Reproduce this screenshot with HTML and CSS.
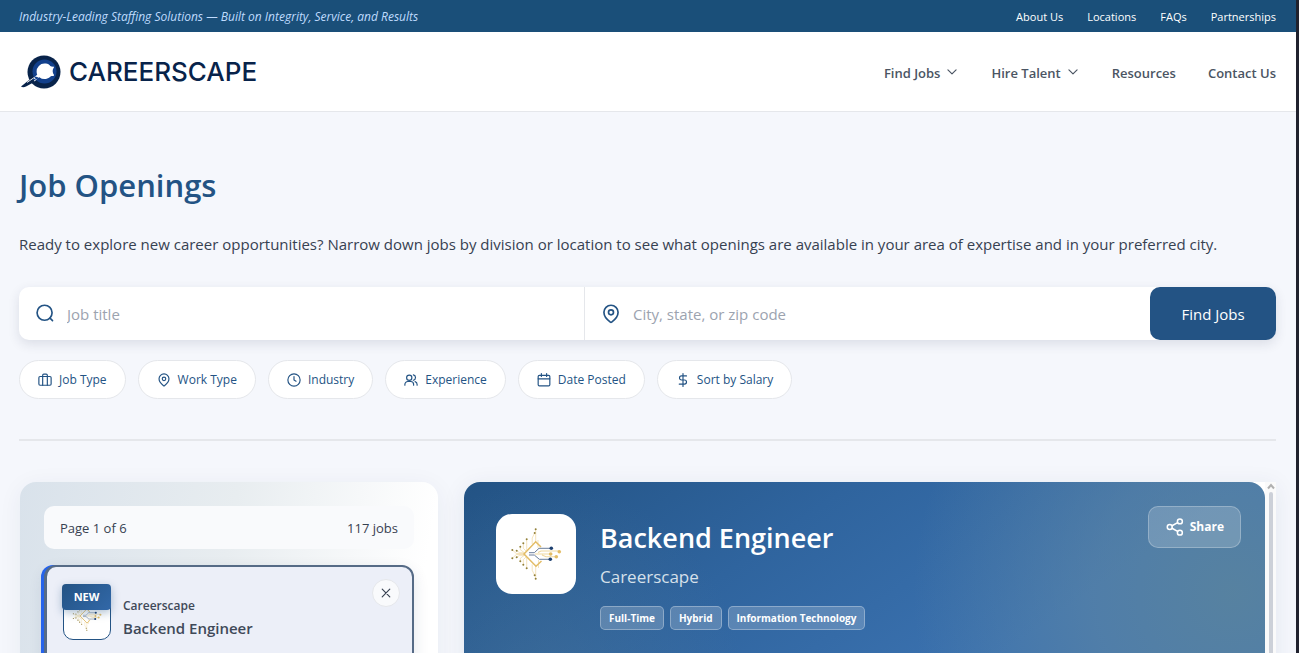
FILE: index.html
```html
<!DOCTYPE html>
<html lang="en">
<head>
<meta charset="utf-8">
<title>Job Openings | Careerscape</title>
<meta name="viewport" content="width=device-width, initial-scale=1">
<link rel="stylesheet" href="styles.css">
</head>
<body>
<svg class="sprite" aria-hidden="true">
  <symbol id="chevron" viewBox="0 0 24 24"><path d="m5 6.500 7 7 7-7"/></symbol>
  <symbol id="search" viewBox="0 0 24 24"><circle cx="11.500" cy="10.500" r="9"/><path d="m21 20-3-3"/></symbol>
  <symbol id="pin" viewBox="0 0 24 24"><path d="M20.500 10c0 5-5.500 10.200-7.700 11.800a1.300 1.300 0 0 1-1.600 0C9 20.200 3.500 15 3.500 10a8.500 8.500 0 0 1 17 0"/><circle cx="12" cy="10" r="3"/></symbol>
  <symbol id="luggage" viewBox="0 0 24 24"><rect x="1.500" y="6" width="21" height="15" rx="2"/><path d="M8 21V4a2 2 0 0 1 2-2h4a2 2 0 0 1 2 2v17"/></symbol>
  <symbol id="clock" viewBox="0 0 24 24"><circle cx="12" cy="12" r="10.500"/><path d="M12 6v6l3.500 2"/></symbol>
  <symbol id="users" viewBox="0 0 24 24"><circle cx="9" cy="8" r="4.500"/><path d="M1.500 21v-1.500a5 5 0 0 1 5-5h5a5 5 0 0 1 5 5V21M16 3.300a4.700 4.700 0 0 1 0 9.200M22.500 21v-1.500a5 5 0 0 0-3.500-4.700"/></symbol>
  <symbol id="calendar" viewBox="0 0 24 24"><rect x="2" y="4" width="20" height="18" rx="2"/><path d="M7.500 1v5M16.500 1v5M2 10h20"/></symbol>
  <symbol id="dollar" viewBox="0 0 24 24"><path d="M12 1v22M18 5H9.500a3.500 3.500 0 0 0 0 7h5a3.500 3.500 0 0 1 0 7H5.500"/></symbol>
  <symbol id="close" viewBox="0 0 24 24"><path d="M18.500 5.500l-13 13M5.500 5.500l13 13"/></symbol>
  <symbol id="share" viewBox="0 0 24 24"><circle cx="18.500" cy="4.500" r="3.300"/><circle cx="5" cy="12" r="3.300"/><circle cx="18.500" cy="19.500" r="3.300"/><path d="m8 13.700 7.500 4.200M15.500 6.100 8 10.300"/></symbol>
  <symbol id="circuit" viewBox="0 0 80 80">
    <g fill="none" stroke="#f0d9a0" stroke-width=".7">
      <path d="M39.700 15.300V28M38.700 19l-2.500 5v6M30.700 25.300v11M27.300 29.300v5l3 3M24.300 32.700v3l4 3M20.700 36.700l3 2h5M16.300 36l4 3.500h8M16.300 44.300l4-3.800h8M20.700 43.300l3-2h5M24.300 47.300v-3l4-3M27.300 50.700v-5l3-3M30.700 54.300v-11M38.700 61.300l-2.500-5v-6M39.700 64.700V52M42 26v8M42.500 54V46"/>
      <path d="M39 40h16M42 38.500l3-1.500h18M46 41l4 1.700h10" stroke-width="1.100"/>
    </g>
    <path d="M45 33 39.700 27.700 28 40l12 12.300 5.500-5.300" fill="none" stroke="#e3bd67" stroke-width="1.500"/>
    <path d="M33 38.700h5.300l4.700-4.400h12M33 41h5.300l5 4.300h11" fill="none" stroke="#6a7d9a" stroke-width="1"/>
    <g fill="#1c3f70"><circle cx="55.300" cy="34.300" r="1.800"/><circle cx="54.300" cy="45.300" r="1.800"/></g>
    <g fill="#e3bd67"><circle cx="54.700" cy="40" r="1.800"/><circle cx="63.300" cy="37.700" r="1.800"/><circle cx="60.300" cy="42.700" r="1.800"/></g>
    <g fill="#92803a"><circle cx="39.700" cy="15.300" r="1"/><circle cx="38.700" cy="19" r="1"/><circle cx="30.700" cy="25.300" r="1"/><circle cx="27.300" cy="29.300" r="1"/><circle cx="24.300" cy="32.700" r="1"/><circle cx="20.700" cy="36.700" r="1"/><circle cx="16.300" cy="36" r="1"/><circle cx="16.300" cy="44.300" r="1"/><circle cx="20.700" cy="43.300" r="1"/><circle cx="24.300" cy="47.300" r="1"/><circle cx="27.300" cy="50.700" r="1"/><circle cx="30.700" cy="54.300" r="1"/><circle cx="38.700" cy="61.300" r="1"/><circle cx="39.700" cy="64.700" r="1"/></g>
  </symbol>
</svg>

<div class="page">
  <div class="topbar">
    <p class="tagline">Industry-Leading Staffing Solutions — Built on Integrity, Service, and Results</p>
    <nav class="topbar-links" aria-label="Company">
      <a href="#about">About Us</a><a href="#locations">Locations</a><a href="#faqs">FAQs</a><a href="#partnerships">Partnerships</a>
    </nav>
  </div>

  <header class="header">
    <a class="brand" href="#home">
      <svg class="brand-mark" viewBox="0 0 42 36" aria-hidden="true">
        <path d="M1 32.500 14 22l4 4-12 6.500c-2 1-4 .8-5 0z" fill="#08234a"/>
        <circle cx="24" cy="18" r="16.500" fill="#08234a"/>
        <circle cx="24.500" cy="17.500" r="12" fill="#12408c"/>
        <path d="M33.500 12.500c-1.600.4-2.900 0-3.800-1.300-1.500-1.200-3.300-1.600-5.200-1.600a7.800 7.800 0 0 0-7.900 8c0 1.200.2 2.200.6 3.200l-3.800 3.200 3.500.7 2.500-1.500a8 8 0 0 0 5.100 1.900c2 0 3.700-.6 5.200-1.800.9-1.200 2.300-1.600 4-1.200l.3-1.400c-1.700-2-1.700-6 0-7z" fill="#fff"/>
        <path d="m12.500 26 3-3.500 3 1-2.500 3z" fill="#12408c"/>
        <path d="m7 28.500 6.500-4.500 2 .8M14 27l2.500-1.500" fill="none" stroke="#fff" stroke-width=".9"/>
      </svg>
      <span>CAREERSCAPE</span>
    </a>
    <nav class="main-nav" aria-label="Main">
      <a href="#find">Find Jobs <svg class="icon icon-14"><use href="#chevron"/></svg></a>
      <a href="#hire">Hire Talent <svg class="icon icon-14"><use href="#chevron"/></svg></a>
      <a href="#resources">Resources</a>
      <a href="#contact">Contact Us</a>
    </nav>
  </header>

  <main class="main">
    <h1>Job Openings</h1>
    <p class="intro">Ready to explore new career opportunities? Narrow down jobs by division or location to see what openings are available in your area of expertise and in your preferred city.</p>

    <form class="search">
      <label class="field"><svg class="icon icon-20" aria-hidden="true"><use href="#search"/></svg><input type="text" placeholder="Job title" aria-label="Job title"></label>
      <label class="field"><svg class="icon icon-20" aria-hidden="true"><use href="#pin"/></svg><input type="text" placeholder="City, state, or zip code" aria-label="City, state, or zip code"></label>
      <button class="search-button" type="button">Find Jobs</button>
    </form>

    <div class="filters">
      <button type="button"><svg class="icon icon-14"><use href="#luggage"/></svg>Job Type</button>
      <button type="button"><svg class="icon icon-14"><use href="#pin"/></svg>Work Type</button>
      <button type="button"><svg class="icon icon-14"><use href="#clock"/></svg>Industry</button>
      <button type="button"><svg class="icon icon-14"><use href="#users"/></svg>Experience</button>
      <button type="button"><svg class="icon icon-14"><use href="#calendar"/></svg>Date Posted</button>
      <button type="button"><svg class="icon icon-14"><use href="#dollar"/></svg>Sort by Salary</button>
    </div>

    <div class="results">
      <section class="list" aria-label="Jobs">
        <div class="pager"><span>Page 1 of 6</span><span>117 jobs</span></div>
        <article class="job">
          <div class="job-logo"><svg><use href="#circuit"/></svg><span class="badge">NEW</span></div>
          <div class="job-text"><p>Careerscape</p><h2>Backend Engineer</h2></div>
          <button class="close" type="button" aria-label="Dismiss"><svg class="icon icon-14"><use href="#close"/></svg></button>
        </article>
      </section>

      <section class="detail" aria-label="Job details">
        <div class="hero">
          <svg class="hero-logo"><use href="#circuit"/></svg>
          <div class="hero-text">
            <h2>Backend Engineer</h2>
            <p>Careerscape</p>
            <ul class="tags"><li>Full-Time</li><li>Hybrid</li><li>Information Technology</li></ul>
          </div>
          <button class="share" type="button"><svg class="icon icon-18"><use href="#share"/></svg>Share</button>
        </div>
        <div class="scrollbar" aria-hidden="true"><svg viewBox="0 0 8 6"><path d="m1 5 3-3.500L7 5" fill="none" stroke="#b0b0b0" stroke-width="2"/></svg><span></span></div>
      </section>
    </div>
  </main>
</div>
</body>
</html>
```
FILE: styles.css
```css
* { box-sizing: border-box; }

body {
  margin: 0;
  background: #f5f7fc;
  color: #374151;
  font-family: "Open Sans", "Noto Sans", sans-serif;
  font-size: 13px;
  line-height: 20px;
}

h1, h2, p, ul { margin: 0; padding: 0; }
a { color: inherit; text-decoration: none; }
button, input { font: inherit; }
button { cursor: pointer; }

.sprite { position: absolute; width: 0; height: 0; }

.icon { flex: none; fill: none; stroke: currentColor; stroke-width: 2; stroke-linecap: round; stroke-linejoin: round; }
.icon-14 { width: 14px; height: 14px; }
.icon-18 { width: 18px; height: 18px; }
.icon-20 { width: 20px; height: 20px; }

.page {
  display: flex;
  flex-direction: column;
  height: 100vh;
  overflow: hidden;
  border-right: 3px solid #20222e;
}

.topbar {
  flex: none;
  display: flex;
  align-items: center;
  justify-content: space-between;
  height: 32px;
  padding: 2px 20px 0 19px;
  background: #1a4f79;
  color: #fff;
  font-size: 12px;
}
.tagline { color: #bfdbfe; font-style: italic; }
.topbar-links { display: flex; gap: 24px; font-size: 11px; font-weight: 500; }

.header {
  flex: none;
  display: flex;
  align-items: center;
  justify-content: space-between;
  height: 80px;
  padding: 0 20px;
  background: #fff;
  border-bottom: 1px solid #e5e7eb;
}
.brand { display: flex; align-items: center; gap: 7px; color: #08234a; font: 500 26px/36px Inter, sans-serif; }
.brand-mark { width: 42px; height: 36px; }
.main-nav { display: flex; gap: 32px; padding-top: 2px; color: #4b5563; font-size: 13px; font-weight: 600; }
.main-nav a { display: flex; align-items: center; gap: 5px; }

.main {
  flex: 1;
  min-height: 0;
  display: flex;
  flex-direction: column;
  padding: 49px 20px 0 19px;
}
h1 { color: #235384; font-size: 31px; font-weight: 600; line-height: 48px; }
.intro { margin-top: 22px; font-size: 15px; line-height: 26px; }

.search {
  flex: none;
  display: flex;
  margin-top: 30px;
  height: 53px;
  border-radius: 10px;
  background: #fff;
  box-shadow: 0 4px 12px rgba(30, 40, 70, .12);
}
.field { flex: 1; display: flex; align-items: center; gap: 12px; padding: 0 16px; color: #235384; }
.field + .field { border-left: 1px solid #e5e7eb; }
.field input { flex: 1; min-width: 0; padding: 0; border: 0; outline: 0; background: none; color: #374151; font-size: 15px; }
.field input::placeholder { color: #9ca3af; opacity: 1; }
.search-button { width: 126px; border: 0; border-radius: 10px; background: #235384; color: #fff; font-size: 15px; }

.filters { flex: none; display: flex; gap: 12px; margin-top: 20px; padding-bottom: 40px; border-bottom: 2px solid #e5e7eb; }
.filters button {
  display: flex;
  align-items: center;
  gap: 7px;
  height: 39px;
  padding: 0 18px;
  border: 1px solid #e5e7eb;
  border-radius: 20px;
  background: #fff;
  color: #235384;
  font-size: 12px;
  font-weight: 500;
}

.results { flex: 1; min-height: 0; display: grid; grid-template-columns: 418px 1fr; gap: 26px; padding: 41px 0 0 1px; }

.list {
  padding: 24px 24px 0;
  border-radius: 16px 16px 0 0;
  background: linear-gradient(100deg, #d9e2eb, #e8edf0 48%, #fff 92%);
  box-shadow: 0 4px 24px rgba(30, 50, 90, .06);
}
.pager { display: flex; justify-content: space-between; padding: 12px 16px 11px; border-radius: 10px; background: #f9fafc; }
.job {
  position: relative;
  display: flex;
  gap: 12px;
  height: 140px;
  margin-top: 16px;
  padding: 25px 16px 0;
  border: 2px solid #566b86;
  border-left-width: 3px;
  border-radius: 12px;
  background: #eceff8;
  box-shadow: -3px 0 0 #2563eb, 0 6px 16px rgba(30, 50, 90, .12);
}
.job-logo { position: relative; width: 48px; height: 48px; border: 1px solid #235384; border-radius: 10px; background: #fff; }
.job-logo svg { display: block; width: 46px; height: 46px; }
.badge {
  position: absolute;
  top: -9px;
  left: -2px;
  width: 49px;
  border-radius: 4px;
  background: linear-gradient(135deg, #235384, #3268a8);
  box-shadow: 0 3px 8px rgba(35, 83, 132, .35);
  color: #fff;
  font-size: 11px;
  font-weight: 700;
  line-height: 26px;
  text-align: center;
}
.job-text { padding-top: 4px; color: #3f4958; font-weight: 600; }
.job-text p { font-size: 12px; }
.job-text h2 { font-size: 15px; font-weight: 600; line-height: 24px; }
.close {
  position: absolute;
  top: 12px;
  right: 12px;
  display: grid;
  place-items: center;
  width: 28px;
  height: 28px;
  padding: 0;
  border: 1px solid #e5e7eb;
  border-radius: 50%;
  background: #f9fafc;
  color: #374151;
}

.detail { display: flex; border-radius: 16px 0 0 0; background: #fff; box-shadow: 0 4px 24px rgba(30, 50, 90, .08); }
.hero {
  flex: 1;
  display: flex;
  align-items: flex-start;
  gap: 24px;
  padding: 32px 24px 0 32px;
  border-radius: 16px 16px 0 0;
  background:
    radial-gradient(circle at 96% 50%, rgba(105, 140, 150, .6), rgba(105, 140, 160, .45) 140px, transparent 320px),
    radial-gradient(circle at 10% 90%, rgba(80, 120, 150, .35), transparent 200px),
    linear-gradient(145deg, #235384, #2f649e 35%, #3b72b0 70%);
  color: #fff;
}
.hero-logo { flex: none; width: 80px; height: 80px; border-radius: 16px; background: #fff; }
.hero-text { flex: 1; }
.hero-text h2 { padding-top: 4px; font-size: 27px; font-weight: 600; line-height: 40px; }
.hero-text p { margin-top: 6px; color: #d6e0ea; font-size: 17px; line-height: 26px; }
.tags { display: flex; gap: 6px; margin-top: 16px; list-style: none; }
.tags li {
  padding: 0 8px;
  border: 1px solid rgba(255, 255, 255, .3);
  border-radius: 5px;
  background: rgba(255, 255, 255, .2);
  font-size: 10px;
  font-weight: 700;
  line-height: 22px;
}
.share {
  display: flex;
  align-items: center;
  gap: 6px;
  height: 42px;
  margin-top: -8px;
  padding: 0 16px 0 17px;
  border: 1px solid rgba(255, 255, 255, .25);
  border-radius: 10px;
  background: rgba(255, 255, 255, .18);
  color: #fff;
  font-size: 12px;
  font-weight: 700;
}
.scrollbar { display: flex; flex-direction: column; align-items: center; gap: 2px; width: 11px; padding-top: 1px; background: #fafafa; }
.scrollbar svg { width: 8px; height: 7px; }
.scrollbar span { flex: 1; width: 4px; border-radius: 2px 2px 0 0; background: #ccd0d8; }
```
